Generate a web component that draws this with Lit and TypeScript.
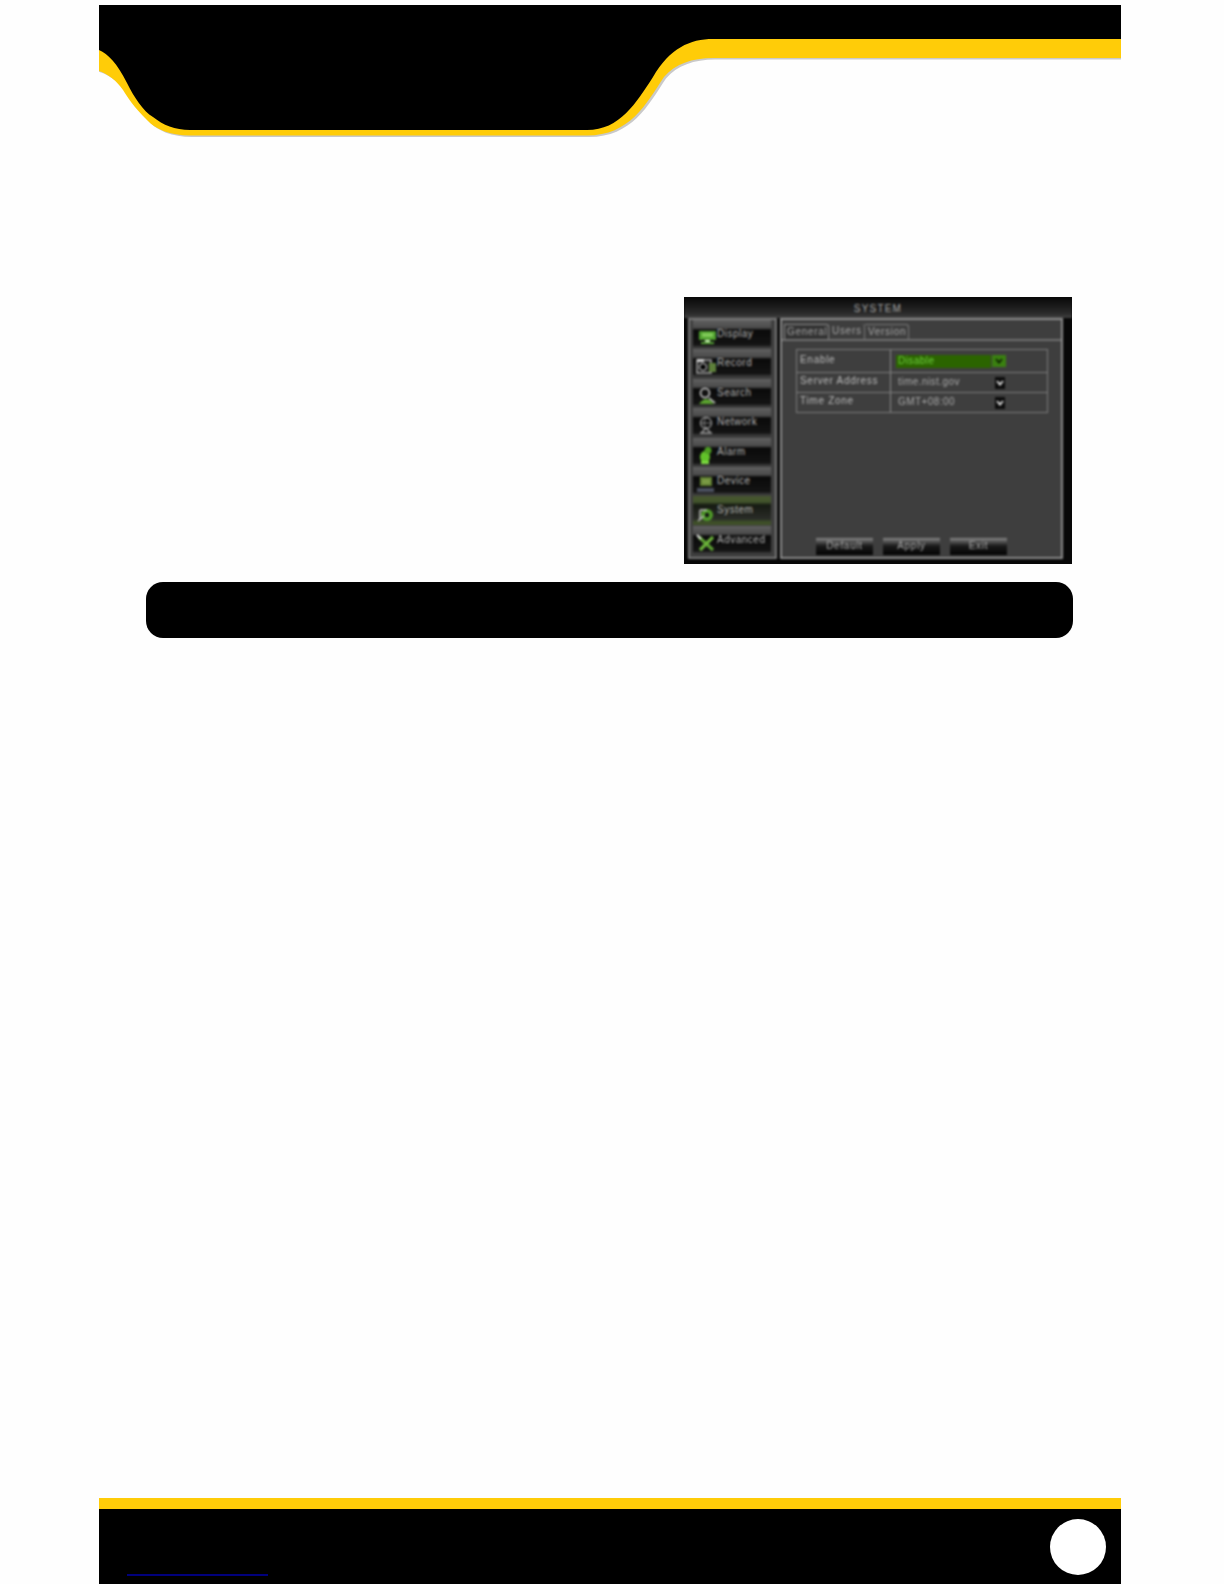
import { LitElement, html, css, svg } from "lit";
import { customElement } from "lit/decorators.js";

const LOWER_EDGE =
  "H713 C692 58 675 64 664 77 C646 104 630 135.5 587 135.5 H190 C170 135.5 155 129 147 120 C133 106 128 98 123 90 C117 81 108 74 99 71";
const SHADOW = `M1130 58 ${LOWER_EDGE} L90 68 V5 H1130 Z`;
const YELLOW = `M1121 58 ${LOWER_EDGE} V5 H1121 Z`;
const BLACK =
  "M99 5 H1121 V39 H713 C690 39 670 48 653 77 C636 103 620 130 587 130 H190 C175 130 163 125 153 117 C143 111 134 97 127 83 C117 63 108 54 99 50 Z";

const icons: Record<string, unknown> = {
  display: svg`<rect x="3" y="3" width="17" height="9" rx="1" fill="#4f9f2e"/><rect x="6" y="5" width="11" height="4" fill="#7fc957"/><rect x="9" y="12" width="5" height="3" fill="#cfe8c0"/><rect x="5" y="14" width="13" height="2" fill="#58a836"/>`,
  record: svg`<rect x="1" y="3" width="14" height="13" fill="#1c1c1c" stroke="#a8a8a8" stroke-width="1.5"/><rect x="1" y="2" width="7" height="3" fill="#d0d0d0"/><circle cx="7" cy="10" r="3.5" fill="#000" stroke="#e2e2e2"/><rect x="13" y="6" width="7" height="9" fill="#5d7f3a"/>`,
  search: svg`<circle cx="9" cy="6" r="4.5" fill="#111" stroke="#cfcfcf" stroke-width="1.6"/><path d="M3 17 Q9 9 15 14 L18 17 Z" fill="#5aa12f"/><path d="M13 11 L19 16" stroke="#ddd" stroke-width="1.6"/>`,
  network: svg`<circle cx="10" cy="7" r="5.5" fill="none" stroke="#9a9a9a" stroke-width="1.3"/><path d="M5 7 H15 M10 2 Q6 7 10 12" stroke="#8a8a8a" fill="none"/><path d="M6 16 L10 12 L14 16 M4 17 H16" stroke="#a5a5a5" stroke-width="1.3" fill="none"/>`,
  alarm: svg`<ellipse cx="9" cy="11" rx="5" ry="6" fill="#62c22a"/><circle cx="12" cy="4.5" r="3.5" fill="#4d9e22"/><rect x="5" y="15" width="8" height="3" fill="#7cdb3f"/>`,
  device: svg`<rect x="4" y="2" width="12" height="9" fill="#5f7d32"/><rect x="6" y="4" width="8" height="5" fill="#7a9a45"/><rect x="1" y="13" width="17" height="4" fill="#4a4f5e"/>`,
  system: svg`<circle cx="11" cy="11" r="6" fill="#4f9a28"/><path d="M4 6 H11 M4 6 V16 M2 17 L8 12" stroke="#c4c4c4" stroke-width="1.4" fill="none"/><circle cx="11" cy="11" r="2.2" fill="#111"/>`,
  advanced: svg`<path d="M3 3 L17 16" stroke="#5da132" stroke-width="3.2"/><path d="M17 3 L4 16" stroke="#6bb23a" stroke-width="3.2"/><path d="M1 1 L5 5" stroke="#e6e6e6" stroke-width="2"/>`,
};

const MENU = [
  { label: "Display", icon: "display" },
  { label: "Record", icon: "record" },
  { label: "Search", icon: "search" },
  { label: "Network", icon: "network" },
  { label: "Alarm", icon: "alarm" },
  { label: "Device", icon: "device" },
  { label: "System", icon: "system", active: true },
  { label: "Advanced", icon: "advanced" },
];

const ROWS = [
  { name: "Enable", value: "Disable", on: true },
  { name: "Server Address", value: "time.nist.gov" },
  { name: "Time Zone", value: "GMT+08:00" },
];

@customElement("app-root")
export class AppRoot extends LitElement {
  static styles = css`
    :host {
      display: block;
      width: 1224px;
      height: 1584px;
      background: #fefefe;
      overflow: hidden;
      font-family: "Liberation Sans", Arial, sans-serif;
    }
    .page {
      box-sizing: border-box;
      width: 1022px;
      height: 1584px;
      margin-left: 99px;
      padding-top: 5px;
      display: flex;
      flex-direction: column;
    }
    .head {
      display: block;
      width: 1022px;
      height: 134px;
      flex: none;
    }
    .shot-row {
      margin-top: 158px;
      padding-right: 49px;
      display: flex;
      justify-content: flex-end;
    }
    .shot {
      width: 388px;
      height: 267px;
      background: #070707;
      overflow: hidden;
      flex: none;
    }
    .inner {
      height: 100%;
      display: flex;
      flex-direction: column;
      filter: blur(0.8px);
      color: #bcbcbc;
      font-size: 10px;
      letter-spacing: 0.7px;
    }
    .title {
      height: 21px;
      flex: none;
      box-sizing: border-box;
      padding-top: 6px;
      text-align: center;
      line-height: 12px;
      letter-spacing: 1.2px;
      color: #a8a8a8;
      background: linear-gradient(#080808 0, #181818 8px, #2c2c2c 17px, #444 21px);
    }
    .body {
      flex: 1;
      min-height: 0;
      display: flex;
      gap: 3px;
      padding: 0 9px 5px 4px;
    }
    .side {
      box-sizing: border-box;
      width: 89px;
      border: 2px solid #777;
      background: #3f3f3f;
      padding: 0 4px 3px 3px;
      display: grid;
      grid-template-rows: repeat(8, 1fr);
      row-gap: 1px;
    }
    .item {
      display: flex;
      align-items: flex-start;
      padding: 8px 0 0 3px;
      box-sizing: border-box;
      min-height: 0;
      background: linear-gradient(#606060 0, #4a4a4a 8px, #0a0a0a 10px, #141414 25px, #3a3a3a 27px);
    }
    .item.active {
      background: linear-gradient(#46552f 0, #43552c 6px, #161a12 9px, #2a2c28 23px, #3f5028 26px);
    }
    .item svg {
      width: 22px;
      height: 19px;
      flex: none;
    }
    .item span {
      margin-left: -1px;
      line-height: 12px;
      letter-spacing: 0.5px;
      color: #b8b8b8;
    }
    .main {
      box-sizing: border-box;
      width: 283px;
      border: 2px solid #8c8c8c;
      background: #3e3e3e;
      display: flex;
      flex-direction: column;
    }
    .tabs {
      display: flex;
      height: 21px;
      flex: none;
      box-sizing: border-box;
      padding: 4px 0 0 2px;
      border-bottom: 2px solid #6f6f6f;
    }
    .tab {
      padding: 1px 3px 0;
      line-height: 12px;
      color: #a5a5a5;
      border-top: 1px solid #777;
      border-right: 1px solid #777;
      border-radius: 0 3px 0 0;
    }
    .tab.first {
      width: 45px;
      box-sizing: border-box;
      border: 1px solid #8a8a8a;
      border-bottom: 0;
      background: #333;
      color: #a0a0a0;
      padding: 1px 0 0 2px;
    }
    .tab.second { width: 36px; box-sizing: border-box; border-top: 0; }
    .tab.third { width: 44px; box-sizing: border-box; }
    .table {
      margin: 8px 0 0 14px;
      width: 252px;
      box-sizing: border-box;
      border: 1px solid #7c7c7c;
      flex: none;
    }
    .row {
      display: grid;
      grid-template-columns: 94px 1fr;
      height: 20px;
      box-sizing: border-box;
      border-top: 1px solid #7c7c7c;
      line-height: 16px;
    }
    .row.first {
      height: 22px;
      border-top: 0;
      line-height: 19px;
    }
    .cell-name {
      padding-left: 3px;
      border-right: 1px solid #8c8c8c;
    }
    .cell-value {
      display: flex;
      align-items: center;
      padding: 0 0 0 5px;
    }
    .val {
      box-sizing: border-box;
      width: 95px;
      height: 13px;
      flex: none;
      padding-left: 2px;
      line-height: 12px;
      letter-spacing: 0.45px;
      color: #a8a8a8;
    }
    .val.on {
      background: #2b6400;
      color: #6fd03f;
    }
    .drop {
      width: 10px;
      height: 12px;
      margin-left: 4px;
      flex: none;
      background: #0c0c0c;
      display: flex;
      align-items: center;
      justify-content: center;
    }
    .drop.on {
      width: 14px;
      margin-left: 1px;
      background: #3a8010;
    }
    .drop svg { width: 8px; height: 6px; display: block; }
    .actions {
      margin-top: auto;
      padding: 0 0 2px 34px;
      display: flex;
      gap: 10px;
    }
    .btn {
      width: 57px;
      height: 17px;
      line-height: 16px;
      text-align: center;
      color: #a8a8a8;
      background: linear-gradient(#8c8c8c 0, #5a5a5a 3px, #1a1a1a 8px, #030303 17px);
    }
    .bar {
      flex: none;
      margin: 18px 48px 0 47px;
      height: 56px;
      background: #000;
      border-radius: 17px;
    }
    .grow { flex: 1; }
    .foot-line {
      flex: none;
      height: 11px;
      background: #ffcc08;
    }
    .foot {
      flex: none;
      height: 75px;
      box-sizing: border-box;
      background: #000;
      padding: 10px 15px 8px 28px;
      display: flex;
      justify-content: space-between;
      align-items: flex-end;
    }
    .link {
      width: 141px;
      height: 2px;
      background: #00007c;
    }
    .num {
      width: 56px;
      height: 56px;
      border-radius: 50%;
      background: #fff;
      margin-bottom: 1px;
    }
  `;

  private arrow(color: string) {
    return html`<svg viewBox="0 0 8 6"><path d="M1 1 L4 4.5 L7 1" fill="none" stroke=${color} stroke-width="1.8" /></svg>`;
  }

  render() {
    return html`
      <div class="page">
        <svg class="head" viewBox="99 5 1022 134" aria-hidden="true">
          <path d=${SHADOW} fill="#c9c9c9" transform="translate(2 1.5)" />
          <path d=${YELLOW} fill="#ffcc08" />
          <path d=${BLACK} fill="#000" />
        </svg>

        <div class="shot-row">
          <div class="shot">
            <div class="inner">
              <div class="title">SYSTEM</div>
              <div class="body">
                <div class="side">
                  ${MENU.map(
                    (m) => html`<div class="item ${m.active ? "active" : ""}">
                      <svg viewBox="0 0 22 19">${icons[m.icon]}</svg>
                      <span>${m.label}</span>
                    </div>`
                  )}
                </div>
                <div class="main">
                  <div class="tabs">
                    <div class="tab first">General</div>
                    <div class="tab second">Users</div>
                    <div class="tab third">Version</div>
                  </div>
                  <div class="table">
                    ${ROWS.map(
                      (r, i) => html`<div class="row ${i === 0 ? "first" : ""}">
                        <div class="cell-name">${r.name}</div>
                        <div class="cell-value">
                          <div class="val ${r.on ? "on" : ""}">${r.value}</div>
                          <div class="drop ${r.on ? "on" : ""}">
                            ${this.arrow(r.on ? "#0b1f02" : "#e4e4e4")}
                          </div>
                        </div>
                      </div>`
                    )}
                  </div>
                  <div class="actions">
                    <div class="btn">Default</div>
                    <div class="btn">Apply</div>
                    <div class="btn">Exit</div>
                  </div>
                </div>
              </div>
            </div>
          </div>
        </div>

        <div class="bar"></div>
        <div class="grow"></div>
        <div class="foot-line"></div>
        <div class="foot">
          <div class="link"></div>
          <div class="num"></div>
        </div>
      </div>
    `;
  }
}
